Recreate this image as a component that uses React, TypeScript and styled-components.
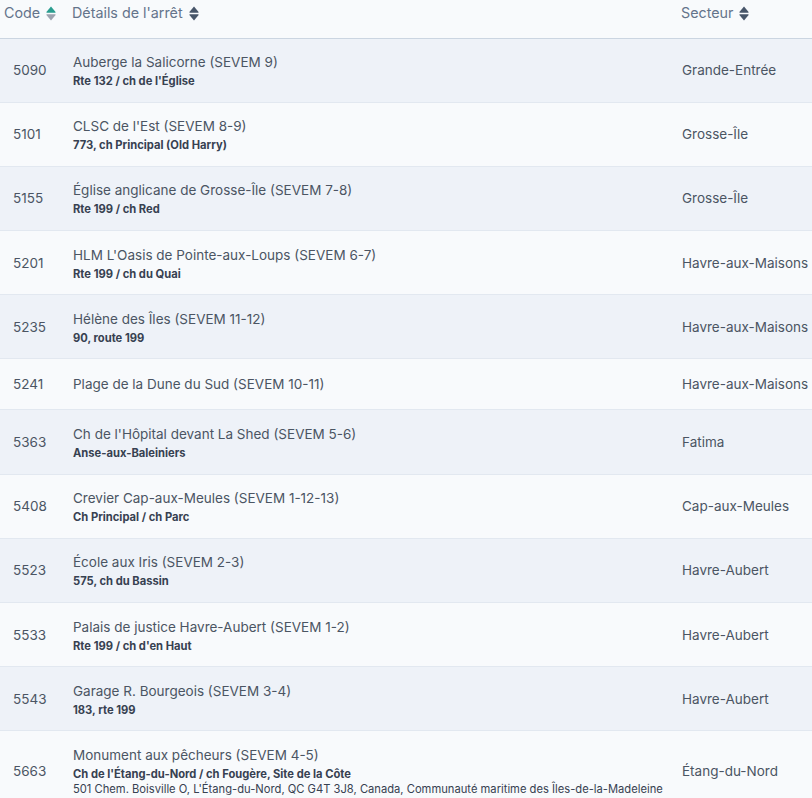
import styled, {createGlobalStyle} from 'styled-components';

const GlobalStyle = createGlobalStyle`
  html, body {
    margin: 0;
    padding: 0;
    overflow: hidden;
    background: #f8fafc;
  }
  body {
    font-family: Inter, "Noto Sans", sans-serif;
  }
`;

const Table = styled.table`
  width: 830px;
  border-collapse: collapse;
  table-layout: fixed;
`;

const HeadRow = styled.tr`
  background: #f8fafc;
  border-bottom: 1px solid #cbd5e1;
`;

const HeadCell = styled.th<{$pad: number}>`
  height: 38px;
  padding: 4px 0 0 ${p => p.$pad}px;
  box-sizing: border-box;
  vertical-align: top;
  text-align: left;
  font-size: 14.3px;
  font-weight: 400;
  line-height: 18px;
  color: #64748b;
  white-space: nowrap;
`;

const HeadLabel = styled.span`
  display: inline-flex;
  align-items: center;
  gap: 6px;
`;

const Row = styled.tr<{$alt: boolean}>`
  background: ${p => (p.$alt ? '#eef2f8' : '#f8fafc')};
  border-bottom: 1px solid #e2e8f0;
`;

const Cell = styled.td<{$pad: number; $single?: boolean}>`
  padding: ${p => (p.$single ? '15px' : '13.6px')} 0 ${p => (p.$single ? '15px' : '13.6px')} ${p => p.$pad}px;
  vertical-align: middle;
  font-size: 13.5px;
  line-height: 20px;
  color: #4b5563;
  white-space: nowrap;
`;

const Title = styled.div`
  font-size: 13.5px;
  line-height: 20px;
  color: #4b5563;
`;

const Sub = styled.div`
  margin-top: 2px;
  font-size: 11.2px;
  line-height: 14px;
  font-weight: 700;
  color: #374151;
`;

const Address = styled.div`
  font-size: 11.2px;
  line-height: 16px;
  color: #374151;
`;

const SortIcon = ({active}: {active?: boolean}) => (
  <svg width="10" height="15" viewBox="0 0 10 15">
    <path d="M5 0.6 L9.6 5.9 Q9.9 6.7 9 6.7 L1 6.7 Q0.1 6.7 0.4 5.9 Z" fill={active ? '#2a9d8f' : '#475569'} />
    <path d="M5 14.4 L9.6 9.1 Q9.9 8.3 9 8.3 L1 8.3 Q0.1 8.3 0.4 9.1 Z" fill={active ? '#9ca3af' : '#475569'} />
  </svg>
);

type Stop = {
  code: string;
  name: string;
  sub?: string;
  address?: string;
  sector: string;
};

const stops: Stop[] = [
  {code: '5090', name: 'Auberge la Salicorne (SEVEM 9)', sub: "Rte 132 / ch de l'Église", sector: 'Grande-Entrée'},
  {code: '5101', name: "CLSC de l'Est (SEVEM 8-9)", sub: '773, ch Principal (Old Harry)', sector: 'Grosse-Île'},
  {code: '5155', name: 'Église anglicane de Grosse-Île (SEVEM 7-8)', sub: 'Rte 199 / ch Red', sector: 'Grosse-Île'},
  {code: '5201', name: "HLM L'Oasis de Pointe-aux-Loups (SEVEM 6-7)", sub: 'Rte 199 / ch du Quai', sector: 'Havre-aux-Maisons'},
  {code: '5235', name: 'Hélène des Îles (SEVEM 11-12)', sub: '90, route 199', sector: 'Havre-aux-Maisons'},
  {code: '5241', name: 'Plage de la Dune du Sud (SEVEM 10-11)', sector: 'Havre-aux-Maisons'},
  {code: '5363', name: "Ch de l'Hôpital devant La Shed (SEVEM 5-6)", sub: 'Anse-aux-Baleiniers', sector: 'Fatima'},
  {code: '5408', name: 'Crevier Cap-aux-Meules (SEVEM 1-12-13)', sub: 'Ch Principal / ch Parc', sector: 'Cap-aux-Meules'},
  {code: '5523', name: 'École aux Iris (SEVEM 2-3)', sub: '575, ch du Bassin', sector: 'Havre-Aubert'},
  {code: '5533', name: 'Palais de justice Havre-Aubert (SEVEM 1-2)', sub: "Rte 199 / ch d'en Haut", sector: 'Havre-Aubert'},
  {code: '5543', name: 'Garage R. Bourgeois (SEVEM 3-4)', sub: '183, rte 199', sector: 'Havre-Aubert'},
  {
    code: '5663',
    name: 'Monument aux pêcheurs (SEVEM 4-5)',
    sub: "Ch de l'Étang-du-Nord / ch Fougère, Site de la Côte",
    address: "501 Chem. Boisville O, L'Étang-du-Nord, QC G4T 3J8, Canada, Communauté maritime des Îles-de-la-Madeleine",
    sector: 'Étang-du-Nord',
  },
];

export default function App() {
  return (
    <>
      <GlobalStyle />
      <Table>
        <colgroup>
          <col style={{width: 60}} />
          <col style={{width: 609}} />
          <col style={{width: 161}} />
        </colgroup>
        <thead>
          <HeadRow>
            <HeadCell $pad={4}>
              <HeadLabel>
                Code <SortIcon active />
              </HeadLabel>
            </HeadCell>
            <HeadCell $pad={12}>
              <HeadLabel>
                Détails de l'arrêt <SortIcon />
              </HeadLabel>
            </HeadCell>
            <HeadCell $pad={12}>
              <HeadLabel>
                Secteur <SortIcon />
              </HeadLabel>
            </HeadCell>
          </HeadRow>
        </thead>
        <tbody>
          {stops.map((s, i) => (
            <Row key={s.code} $alt={i % 2 === 0}>
              <Cell $pad={13} $single={!s.sub}>{s.code}</Cell>
              <Cell $pad={13} $single={!s.sub}>
                <Title>{s.name}</Title>
                {s.sub && <Sub>{s.sub}</Sub>}
                {s.address && <Address>{s.address}</Address>}
              </Cell>
              <Cell $pad={13} $single={!s.sub}>{s.sector}</Cell>
            </Row>
          ))}
        </tbody>
      </Table>
    </>
  );
}
